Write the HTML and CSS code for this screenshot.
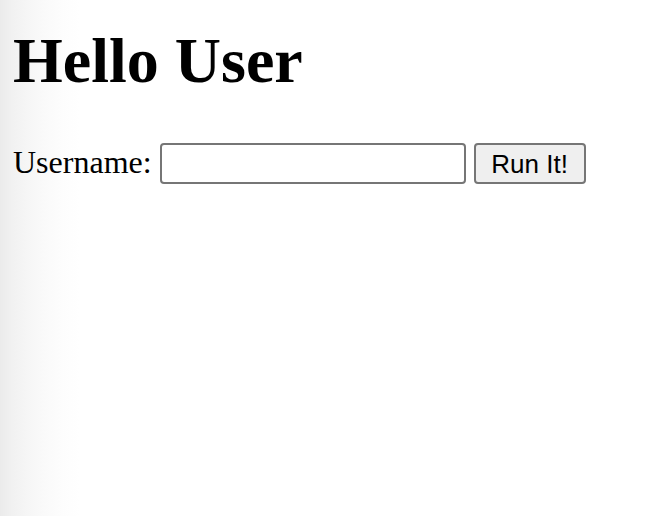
FILE: index.html
```html
<!DOCTYPE html>
<html lang="en">
<head>
<meta charset="utf-8">
<title>Hello User</title>
<link rel="stylesheet" href="styles.css">
</head>
<body>
<main class="page">
  <h1 class="title">Hello User</h1>
  <form class="row">
    <label class="label" for="username">Username:</label>
    <input class="field" id="username" type="text">
    <button class="btn" type="button">Run It!</button>
  </form>
</main>
</body>
</html>
```
FILE: styles.css
```css
html, body {
  margin: 0;
  padding: 0;
  height: 100%;
}
body {
  background: linear-gradient(to right, #ebebeb 0px, #f1f1f1 12px, #f6f6f6 28px, #fafafa 45px, #fdfdfd 62px, #ffffff 80px);
  font-family: "Liberation Serif", "Times New Roman", serif;
  color: #000;
}
.page {
  padding: 0 13px;
}
.title {
  margin: 0;
  padding-top: 24px;
  margin-bottom: 45px;
  font-size: 64px;
  line-height: 74px;
  font-weight: bold;
}
.row {
  display: flex;
  align-items: center;
  gap: 8px;
  margin: 0;
}
.label {
  font-size: 32px;
  line-height: 37px;
  padding-bottom: 3px;
}
.field {
  box-sizing: border-box;
  width: 306px;
  height: 41px;
  margin: 0;
  border: 2px solid #767676;
  border-radius: 4px;
  background: #fff;
  padding: 2px 6px;
  font-family: "Liberation Sans", Arial, sans-serif;
  font-size: 26px;
}
.btn {
  box-sizing: border-box;
  width: 112px;
  height: 41px;
  margin: 0;
  padding: 0;
  border: 2px solid #767676;
  border-radius: 4px;
  background: #efefef;
  color: #000;
  font-family: "Liberation Sans", Arial, sans-serif;
  font-size: 26px;
  line-height: 1;
  text-align: center;
}
```
